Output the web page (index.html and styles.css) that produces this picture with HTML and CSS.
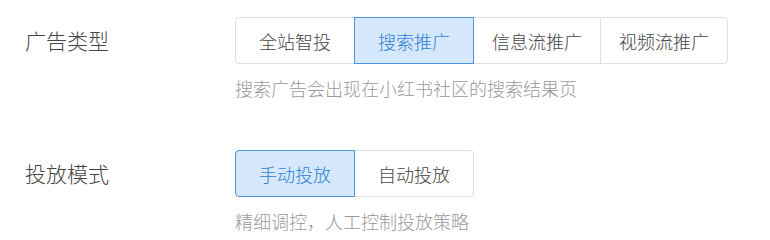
FILE: index.html
```html
<!DOCTYPE html>
<html lang="zh-CN">
<head>
    <meta charset="UTF-8">
    <title>广告设置</title>
    <link rel="stylesheet" href="styles.css">
</head>
<body>
    <div class="ad-form">
        <div class="form-item">
            <div class="form-label">广告类型</div>
            <div class="form-control">
                <div class="radio-group">
                    <button class="radio-btn">全站智投</button>
                    <button class="radio-btn active">搜索推广</button>
                    <button class="radio-btn">信息流推广</button>
                    <button class="radio-btn">视频流推广</button>
                </div>
                <div class="form-hint">搜索广告会出现在小红书社区的搜索结果页</div>
            </div>
        </div>
        <div class="form-item">
            <div class="form-label">投放模式</div>
            <div class="form-control">
                <div class="radio-group">
                    <button class="radio-btn active">手动投放</button>
                    <button class="radio-btn">自动投放</button>
                </div>
                <div class="form-hint">精细调控，人工控制投放策略</div>
            </div>
        </div>
    </div>
</body>
</html>
```

FILE: styles.css
```css
body {
    margin: 0;
    padding: 0;
    background-color: #fff;
    font-family: "Noto Sans CJK SC", "Microsoft YaHei", sans-serif;
    font-weight: 300;
    color: #444;
}
.ad-form {
    padding: 17px 0 0 25px;
}
.form-item {
    display: flex;
    margin-bottom: 49px;
}
.form-item:last-child {
    margin-bottom: 0;
}
.form-label {
    width: 210px;
    font-size: 21px;
    line-height: 46px;
    color: #444;
}
.form-control {
    display: flex;
    flex-direction: column;
    align-items: flex-start;
}
.radio-group {
    display: flex;
}
.radio-btn {
    min-width: 120px;
    height: 47px;
    padding: 0 18px;
    margin-left: -1px;
    font-family: inherit;
    font-weight: 300;
    font-size: 18px;
    color: #444;
    background-color: #fff;
    border: 1px solid #dcdfe6;
    cursor: pointer;
}
.radio-btn:first-child {
    margin-left: 0;
    border-radius: 4px 0 0 4px;
}
.radio-btn:last-child {
    border-radius: 0 4px 4px 0;
}
.radio-btn.active {
    position: relative;
    color: #2f7fd6;
    background-color: #d6e8fd;
    border-color: #4b93e3;
}
.form-hint {
    margin-top: 11px;
    font-size: 18px;
    line-height: 26px;
    color: #999;
}
```
